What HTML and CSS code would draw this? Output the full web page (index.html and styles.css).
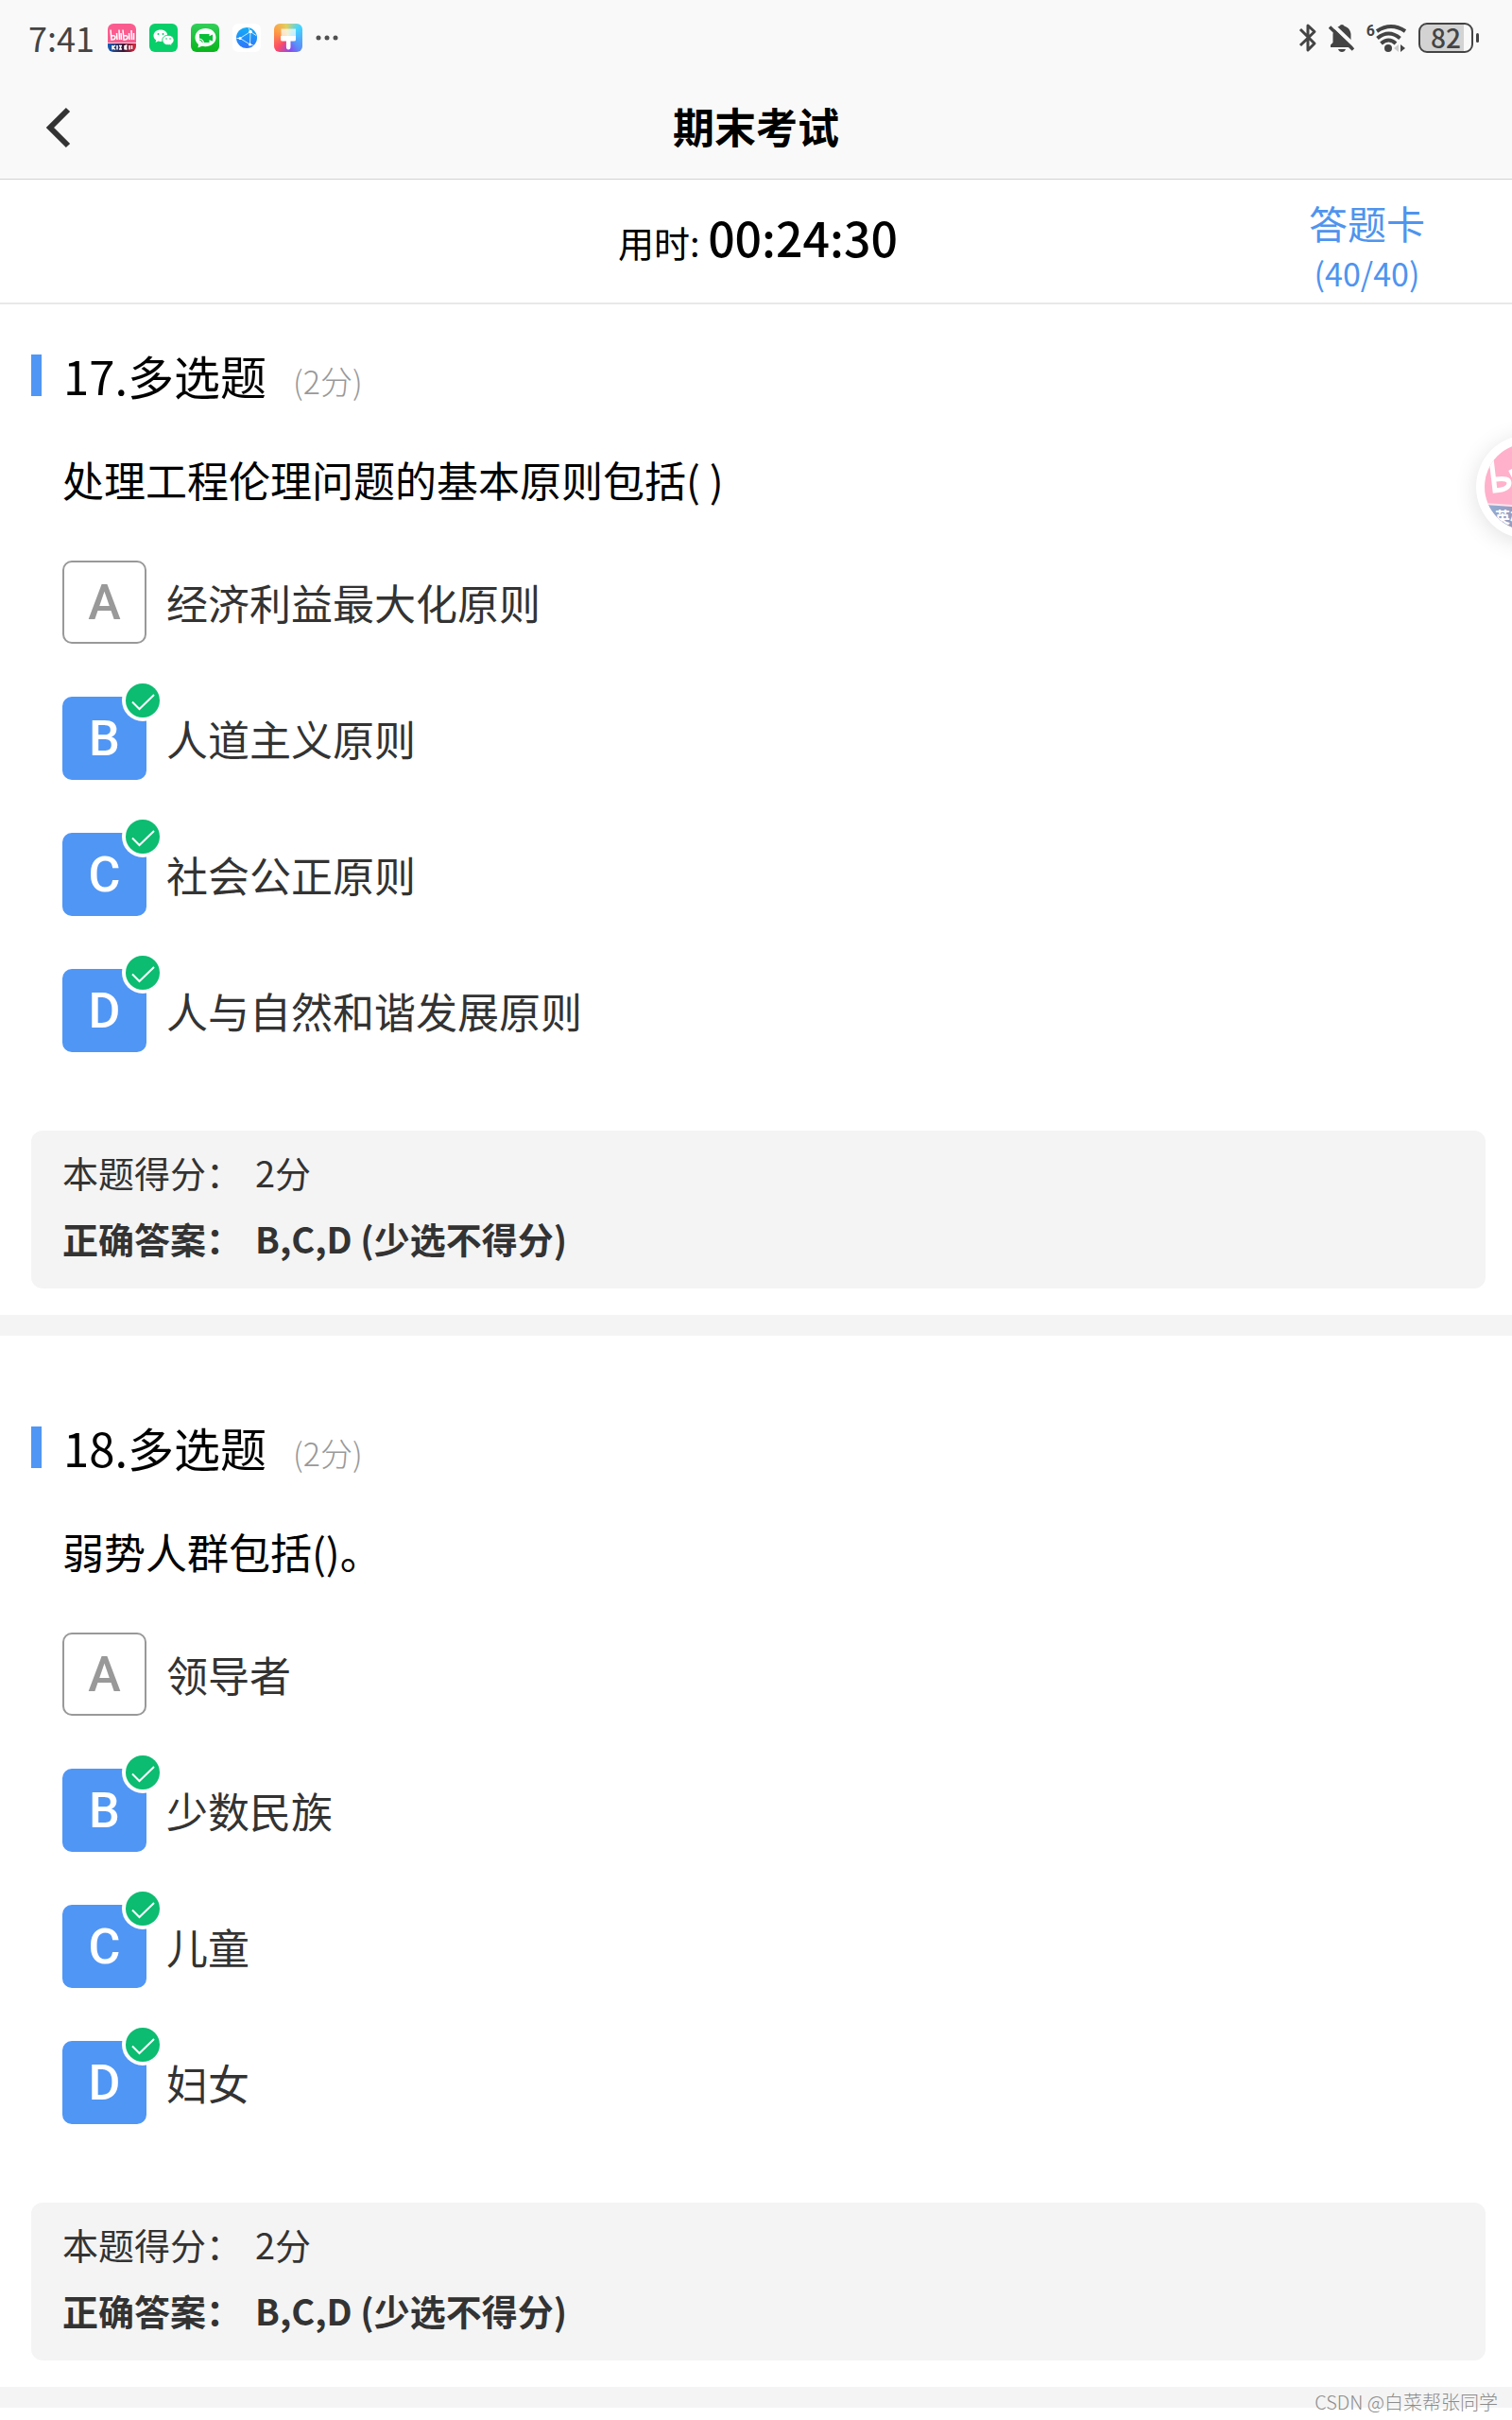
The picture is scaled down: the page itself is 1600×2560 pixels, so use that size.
FILE: index.html
```html
<!DOCTYPE html>
<html lang="zh-CN">
<head>
<meta charset="utf-8">
<meta name="viewport" content="width=device-width, initial-scale=1">
<title>期末考试</title>
<link rel="stylesheet" href="styles.css">
</head>
<body>
<svg class="defs" aria-hidden="true">
  <symbol id="tick" viewBox="0 0 44 44">
    <circle cx="22" cy="22" r="22" fill="#fff"/>
    <circle cx="22" cy="22" r="18" fill="#0cbc70"/>
    <path d="M11 23.500l7.500 7.500L34 16" fill="none" stroke="#fff" stroke-width="2"/>
  </symbol>
</svg>

<header class="top">
  <div class="status">
    <div class="status-left">
      <span class="clock">7:41</span>
      <div class="apps">
        <svg class="app" viewBox="0 0 30 30" aria-hidden="true">
          <defs>
            <linearGradient id="band"><stop offset="0" stop-color="#1560b8"/><stop offset=".55" stop-color="#3a1430"/><stop offset="1" stop-color="#e02a40"/></linearGradient>
            <clipPath id="round"><rect width="30" height="30" rx="6"/></clipPath>
          </defs>
          <g clip-path="url(#round)">
            <rect width="30" height="21" fill="#fb5c90"/>
            <rect y="20" width="30" height="10" fill="url(#band)"/>
            <path d="M0 20.500h30" stroke="#ffd0de"/>
            <path d="M3 6.500l1 10.500q4 0 4-2.500t-4-1.500M9.500 10l.5 7M12 6.500l.5 10.500M14 10l.5 7M16 6.500l1 10.500q4 0 4-2.500t-4-1.500M22.500 10l.5 7M25 7l.5 10M27.500 10v7" fill="none" stroke="#fff" stroke-width="1.500"/>
            <path d="M5 23v4.500M5 25.500l3-2.500M5 25l3 2.500M10 23v4.500M12 23.500h3M12 27h3M13.500 23v4M18 23v4.500M20.500 23h-1v4h1M23 23v4.500M25.500 23v4" fill="none" stroke="#fff" stroke-width="1.500"/>
          </g>
        </svg>
        <svg class="app" viewBox="0 0 30 30" aria-hidden="true">
          <rect width="30" height="30" rx="6" fill="#08cf69"/>
          <path d="M12 6.500c-4.300 0-7.500 2.700-7.500 6.200 0 2 1 3.600 2.700 4.800l-.7 2.500 2.900-1.500c4.500 1.500 9.800-1.300 9.900-5.800 0-3.500-3-6.200-7.300-6.200z" fill="#fff"/>
          <path d="M20 12.200c-3.400 0-6.200 2.300-6.200 5.300 0 3.700 4 6 7.900 5l2.400 1.200-.6-2c1.600-1.100 2.600-2.500 2.600-4.200 0-3-2.700-5.300-6.100-5.300z" fill="#fff" stroke="#08cf69"/>
          <g fill="#08cf69"><circle cx="9.500" cy="11" r="1"/><circle cx="14.500" cy="11" r="1"/><circle cx="18" cy="16" r=".8"/><circle cx="22" cy="16" r=".8"/></g>
        </svg>
        <svg class="app" viewBox="0 0 30 30" aria-hidden="true">
          <defs><linearGradient id="green" x2="0" y2="1"><stop stop-color="#32cf5a"/><stop offset="1" stop-color="#08b51a"/></linearGradient></defs>
          <rect width="30" height="30" rx="6" fill="url(#green)"/>
          <path d="M15.500 5C9 5 4.500 9 4.500 14.700c0 3 1.300 5.500 3.500 7.300L7.500 25.500l4.200-1.800C19 25.500 26.500 21.500 26.500 14.700 26.500 9 22 5 15.500 5z" fill="#fff"/>
          <path d="M9 11h10.500v2.200l3.500-1.700v7l-3.500-1.300V20H14q-1-4-5-4.500z" fill="#0abf38"/>
          <path d="M9 17q3 .3 3.300 3" fill="none" stroke="#0abf38"/>
        </svg>
        <svg class="app" viewBox="0 0 30 30" aria-hidden="true">
          <defs><linearGradient id="blue" x2="0" y2="1"><stop stop-color="#12adf8"/><stop offset="1" stop-color="#3175fa"/></linearGradient></defs>
          <rect width="30" height="30" rx="6" fill="#fff"/>
          <circle cx="15" cy="15" r="11" fill="url(#blue)"/>
          <g fill="none" stroke="#c6eaff"><path d="M8 15.500L19 8.500 18.500 22zM19 8.500l6 4M8 15.500H4.500M18.500 22l4 1M19 8.500L17 4.500"/></g>
          <g fill="#fff"><circle cx="8" cy="15.500" r="1.500"/><circle cx="19" cy="8.500" r="1.800"/><circle cx="18.500" cy="22" r="1.600"/></g>
        </svg>
        <span class="app brush">
          <svg viewBox="0 0 30 30" aria-hidden="true">
            <path d="M7.500 5.500h15.500v8h-15.500z" fill="#fff" opacity=".7"/>
            <path d="M7 13h16v4q0 1.500-2 1.500h-3.500v6q0 3-2.300 3t-2.300-3v-6H9q-2 0-2-1.500z" fill="#fff"/>
          </svg>
        </span>
      </div>
      <svg class="more" viewBox="0 0 24 6" aria-hidden="true"><g fill="#505050"><circle cx="3" cy="3" r="2.500"/><circle cx="12" cy="3" r="2.500"/><circle cx="21" cy="3" r="2.500"/></g></svg>
    </div>
    <div class="status-right">
      <svg class="bt" viewBox="0 0 20 32" aria-hidden="true"><path d="M2 7l15 15-7 7V3l7 6.500L2 24" fill="none" stroke="#444" stroke-width="3" stroke-linejoin="round"/></svg>
      <svg class="bell" viewBox="0 0 28 32" aria-hidden="true">
        <path d="M14 2q2 0 2.500 1.500C21 5 23 8 23.500 12v9l2 2.500v2.500H2v-2.500L4.500 21v-9C5 8 8 5 11.500 3.500Q12 2 14 2z" fill="#444"/>
        <path d="M10 28h8q-1 3-4 3t-4-3z" fill="#444"/>
        <path d="M3 1l26 25" stroke="#f9f9f9" stroke-width="4"/>
        <path d="M1 4.500l25 24" stroke="#444" stroke-width="3.500"/>
      </svg>
      <div class="network">
        <span class="wifi-gen">6</span>
        <svg class="wifi" viewBox="0 0 34 32" aria-hidden="true">
          <g fill="none" stroke="#444" stroke-width="4"><path d="M2 9q15-10 30 0"/><path d="M2.500 16.500q12-10 24 0"/><path d="M6.500 22q8-7 15.500 0"/></g>
          <circle cx="14" cy="27" r="4" fill="#444"/>
          <path d="M25 23v8l-5-4z" fill="#ccc"/><path d="M27 23v8l5-4z" fill="#444"/>
        </svg>
      </div>
      <div class="battery"><span class="battery-level">82</span></div>
    </div>
  </div>
  <div class="nav">
    <button class="back" type="button" aria-label="返回"><svg viewBox="0 0 28 44" aria-hidden="true"><path d="M24 3L5 22l19 19" fill="none" stroke="#333" stroke-width="6"/></svg></button>
    <h1 class="nav-title">期末考试</h1>
  </div>
</header>

<div class="timer">
  <p class="elapsed">用时: <strong class="elapsed-time">00:24:30</strong></p>
  <button class="card" type="button"><span class="card-name">答题卡</span><span class="card-count">(40/40)</span></button>
</div>

<main>
  <section class="question">
    <div class="head"><h2 class="type">17.多选题</h2><span class="points">(2分)</span></div>
    <p class="stem">处理工程伦理问题的基本原则包括( )</p>
    <div class="options">
      <label class="option"><span class="box"><input type="checkbox" name="q17"><span class="letter">A</span></span>经济利益最大化原则</label>
      <label class="option"><span class="box"><input type="checkbox" name="q17" checked><span class="letter">B</span><svg class="tick"><use href="#tick"/></svg></span>人道主义原则</label>
      <label class="option"><span class="box"><input type="checkbox" name="q17" checked><span class="letter">C</span><svg class="tick"><use href="#tick"/></svg></span>社会公正原则</label>
      <label class="option"><span class="box"><input type="checkbox" name="q17" checked><span class="letter">D</span><svg class="tick"><use href="#tick"/></svg></span>人与自然和谐发展原则</label>
    </div>
    <dl class="result">
      <div class="line"><dt>本题得分：</dt><dd>2分</dd></div>
      <div class="line line-answer"><dt>正确答案：</dt><dd>B,C,D (少选不得分)</dd></div>
    </dl>
  </section>

  <section class="question">
    <div class="head"><h2 class="type">18.多选题</h2><span class="points">(2分)</span></div>
    <p class="stem">弱势人群包括()。</p>
    <div class="options">
      <label class="option"><span class="box"><input type="checkbox" name="q18"><span class="letter">A</span></span>领导者</label>
      <label class="option"><span class="box"><input type="checkbox" name="q18" checked><span class="letter">B</span><svg class="tick"><use href="#tick"/></svg></span>少数民族</label>
      <label class="option"><span class="box"><input type="checkbox" name="q18" checked><span class="letter">C</span><svg class="tick"><use href="#tick"/></svg></span>儿童</label>
      <label class="option"><span class="box"><input type="checkbox" name="q18" checked><span class="letter">D</span><svg class="tick"><use href="#tick"/></svg></span>妇女</label>
    </div>
    <dl class="result">
      <div class="line"><dt>本题得分：</dt><dd>2分</dd></div>
      <div class="line line-answer"><dt>正确答案：</dt><dd>B,C,D (少选不得分)</dd></div>
    </dl>
  </section>
</main>

<button class="float" type="button" aria-label="哔哩哔哩">
  <svg viewBox="0 0 92 92" aria-hidden="true">
    <defs>
      <clipPath id="disc"><circle cx="46" cy="46" r="46"/></clipPath>
      <linearGradient id="strip"><stop stop-color="#8fb0d8"/><stop offset=".5" stop-color="#a08eae"/><stop offset="1" stop-color="#f08a9a"/></linearGradient>
    </defs>
    <g clip-path="url(#disc)">
      <rect width="92" height="92" fill="#ffb1cb"/>
      <path d="M0 64l92 6v24H0z" fill="url(#strip)"/>
      <path d="M0 64l92 6" stroke="#ffe3ec" stroke-width="2"/>
      <path d="M7 16l4 34q15-1 15-8 0-6-14-4" fill="none" stroke="#fff" stroke-width="5"/>
      <path d="M27 28l4 8M34 38l2 12" stroke="#fff" stroke-width="4"/>
      <text x="11" y="84" class="float-text">英雄</text>
    </g>
  </svg>
</button>
<footer class="mark">CSDN @白菜帮张同学</footer>
</body>
</html>
```
FILE: styles.css
```css
* {
  box-sizing: border-box;
}

body {
  position: relative;
  min-height: 100vh;
  margin: 0;
  padding-bottom: 13px;
  overflow-x: hidden;
  background: #fff;
  color: #000;
  font-family: "Noto Sans CJK SC", sans-serif;
}

h1, h2, p, dl, dd {
  margin: 0;
}

button {
  padding: 0;
  border: 0;
  background: none;
  font-family: inherit;
  cursor: pointer;
}

svg {
  display: block;
}

.defs {
  position: absolute;
  width: 0;
  height: 0;
}

/* Status bar and title */
.top {
  border-bottom: 1px solid #d2d2d2;
  background: #f9f9f9;
}

.status {
  display: flex;
  align-items: center;
  justify-content: space-between;
  height: 80px;
  padding: 0 35px 0 30px;
  color: #444;
}

.status-left,
.status-right,
.apps {
  display: flex;
  align-items: center;
}

.status-left {
  gap: 14px;
}

.clock {
  padding-bottom: 2px;
  font-size: 36px;
  line-height: 40px;
}

.apps {
  gap: 14px;
}

.app {
  width: 30px;
  height: 30px;
}

.brush {
  border-radius: 6px;
  background: conic-gradient(from 45deg, #45d5ff, #5a8cf8 25%, #8a48f0 35%, #fb4a68 50%, #ff9a42 70%, #e0d060 85%, #45d5ff);
}

.more {
  width: 24px;
  height: 6px;
}

.status-right {
  gap: 12px;
}

.bt {
  width: 20px;
  height: 32px;
}

.bell {
  width: 28px;
  height: 32px;
}

.network {
  display: flex;
  align-items: flex-start;
}

.wifi {
  width: 34px;
  height: 32px;
}

.wifi-gen {
  font: 700 16px/18px Roboto, sans-serif;
}

.battery {
  display: flex;
  align-items: center;
}

.battery-level {
  width: 58px;
  height: 32px;
  border: 2px solid #444;
  border-radius: 9px;
  background: linear-gradient(90deg, #d3d3d3 86%, #f9f9f9 86%);
  font: 500 28px/26px "Noto Sans CJK SC", sans-serif;
  text-align: center;
}

.battery::after {
  width: 3px;
  height: 10px;
  margin-left: 3px;
  border-radius: 2px;
  background: #444;
  content: "";
}

.nav {
  display: grid;
  grid-template-columns: 1fr auto 1fr;
  align-items: center;
  height: 109px;
  padding: 0 48px;
}

.back {
  justify-self: start;
  width: 28px;
  height: 44px;
}

.nav-title {
  padding-bottom: 4px;
  font-size: 44px;
  font-weight: 700;
  line-height: 60px;
}

/* Elapsed time and answer card */
.timer {
  display: grid;
  grid-template-columns: 1fr auto 1fr;
  align-items: center;
  height: 132px;
  padding: 0 92px;
  border-bottom: 2px solid #e8e8e8;
}

.elapsed {
  grid-column: 2;
  padding-bottom: 4px;
  padding-left: 4px;
  font-size: 38px;
  line-height: 60px;
}

.elapsed-time {
  font-size: 50px;
  font-weight: 500;
}

.card {
  display: flex;
  flex-direction: column;
  align-items: center;
  justify-self: end;
  padding-top: 8px;
  color: #4f94ee;
}

.card-name {
  font-size: 41px;
  line-height: 60px;
}

.card-count {
  font-size: 34px;
  line-height: 48px;
}

/* Questions */
.question {
  padding: 45px 28px 28px 33px;
  border-bottom: 22px solid #f4f4f4;
}

.question + .question {
  padding-top: 88px;
}

.head {
  display: flex;
  align-items: center;
  height: 60px;
}

.head::before {
  width: 11px;
  height: 44px;
  margin-right: 23px;
  background: #5096f5;
  content: "";
}

.type {
  font-size: 49px;
  font-weight: 400;
  line-height: 60px;
}

.points {
  margin-top: 10px;
  margin-left: 28px;
  color: #999;
  font-size: 34px;
  font-weight: 300;
}

.stem {
  margin: 50px 0 56px;
  padding-left: 33px;
  font-size: 44px;
  line-height: 60px;
}

.options {
  display: flex;
  flex-direction: column;
  align-items: flex-start;
  gap: 56px;
  padding-left: 33px;
}

.option {
  display: flex;
  align-items: center;
  gap: 21px;
  color: #333;
  font-size: 44px;
  line-height: 60px;
}

.box {
  display: grid;
  position: relative;
  width: 89px;
  height: 88px;
}

.box input,
.letter {
  grid-area: 1 / 1;
}

.box input {
  width: 100%;
  height: 100%;
  margin: 0;
  border: 2px solid #999;
  border-radius: 10px;
  appearance: none;
}

.box input:checked {
  border-color: #5096f5;
  background: #5096f5;
}

.letter {
  place-self: center;
  z-index: 1;
  padding-top: 2px;
  color: #999;
  font: 500 52px/60px Roboto, sans-serif;
}

.box input:checked + .letter {
  color: #fff;
}

.tick {
  position: absolute;
  top: -18px;
  left: 63px;
  z-index: 2;
  width: 44px;
  height: 44px;
}

/* Score and correct answer */
.result {
  margin-top: 83px;
  padding: 9px 33px 18px;
  border-radius: 12px;
  background: #f4f4f4;
  color: #333;
  font-size: 38px;
  line-height: 70px;
}

.line {
  display: flex;
  gap: 14px;
}

.line-answer {
  font-weight: 700;
}

/* Floating shortcut that is docked off the right edge */
.float {
  position: absolute;
  top: 460px;
  right: -72px;
  padding: 9px;
  border-radius: 50%;
  background: #fff;
  box-shadow: 0 4px 24px rgba(0, 0, 0, .12);
}

.float svg {
  width: 92px;
  height: 92px;
}

.float-text {
  fill: #fff;
  font: 700 16px "Noto Sans CJK SC", sans-serif;
}

.mark {
  position: absolute;
  right: 15px;
  bottom: 4px;
  color: #8c8c8c;
  font-size: 20px;
  font-weight: 300;
  line-height: 30px;
}
```
